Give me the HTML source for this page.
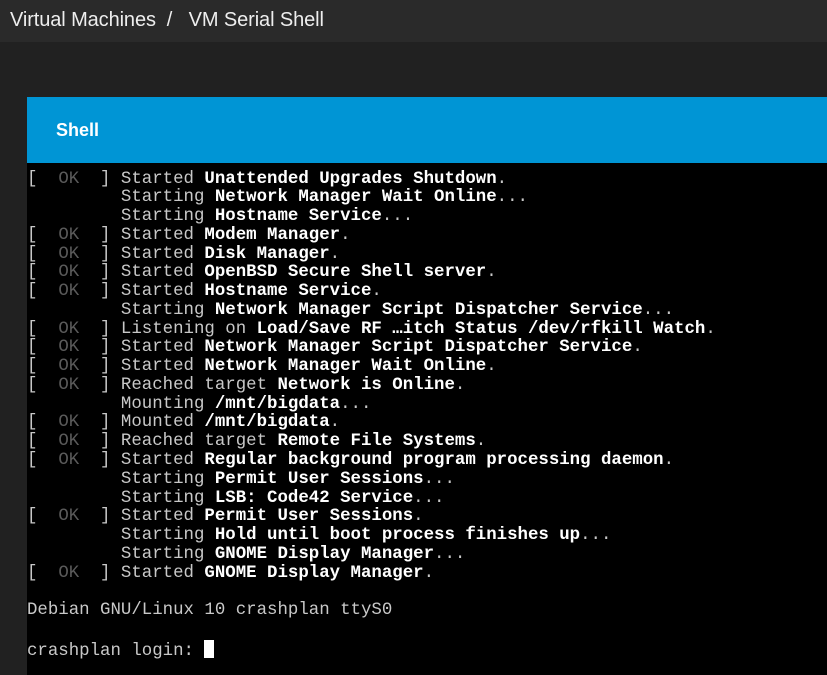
<!DOCTYPE html>
<html><head><style>
html,body{margin:0;padding:0;width:827px;height:675px;overflow:hidden;background:#212121;}
.top{position:absolute;left:0;top:0;width:827px;height:42px;background:#2a2a2a;}
.crumb{position:absolute;left:10px;top:9px;font:20px "Liberation Sans",sans-serif;color:#eee;letter-spacing:-0.1px;}
.card{position:absolute;left:27px;top:97px;width:800px;height:578px;background:#000;}
.hdr{height:66px;background:#0095d5;color:#fff;font:bold 18px "Liberation Sans",sans-serif;line-height:66px;padding-left:29px;}
pre{margin:0;padding:7.5px 0 0 0;font:17.4px/18.77px "Liberation Mono",monospace;color:#c8c8c8;}
b{color:#fff;}
.ok{color:#5a5a5a;}
.cur{display:inline-block;width:10px;height:18px;background:#fff;vertical-align:-3px;}
</style></head><body>
<div class="top"><div class="crumb">Virtual Machines &nbsp;/ &nbsp; VM Serial Shell</div></div>
<div class="card"><div class="hdr">Shell</div>
<pre>[  <span class="ok">OK</span>  ] Started <b>Unattended Upgrades Shutdown</b>.
         Starting <b>Network Manager Wait Online</b>...
         Starting <b>Hostname Service</b>...
[  <span class="ok">OK</span>  ] Started <b>Modem Manager</b>.
[  <span class="ok">OK</span>  ] Started <b>Disk Manager</b>.
[  <span class="ok">OK</span>  ] Started <b>OpenBSD Secure Shell server</b>.
[  <span class="ok">OK</span>  ] Started <b>Hostname Service</b>.
         Starting <b>Network Manager Script Dispatcher Service</b>...
[  <span class="ok">OK</span>  ] Listening on <b>Load/Save RF …itch Status /dev/rfkill Watch</b>.
[  <span class="ok">OK</span>  ] Started <b>Network Manager Script Dispatcher Service</b>.
[  <span class="ok">OK</span>  ] Started <b>Network Manager Wait Online</b>.
[  <span class="ok">OK</span>  ] Reached target <b>Network is Online</b>.
         Mounting <b>/mnt/bigdata</b>...
[  <span class="ok">OK</span>  ] Mounted <b>/mnt/bigdata</b>.
[  <span class="ok">OK</span>  ] Reached target <b>Remote File Systems</b>.
[  <span class="ok">OK</span>  ] Started <b>Regular background program processing daemon</b>.
         Starting <b>Permit User Sessions</b>...
         Starting <b>LSB: Code42 Service</b>...
[  <span class="ok">OK</span>  ] Started <b>Permit User Sessions</b>.
         Starting <b>Hold until boot process finishes up</b>...
         Starting <b>GNOME Display Manager</b>...
[  <span class="ok">OK</span>  ] Started <b>GNOME Display Manager</b>.

Debian GNU/Linux 10 crashplan ttyS0

crashplan login: <span class="cur"></span></pre>
</div>
</body></html>
